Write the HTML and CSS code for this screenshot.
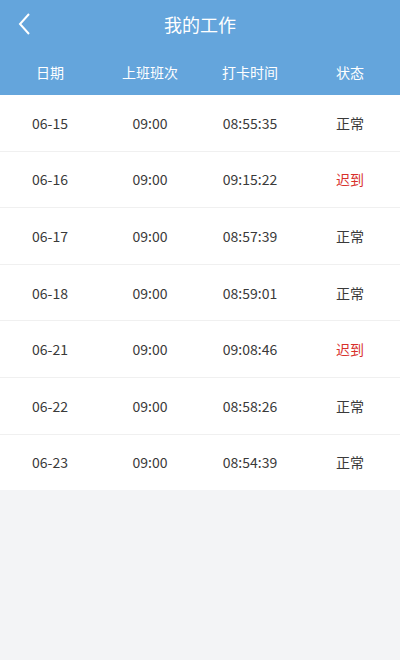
FILE: index.html
```html
<!DOCTYPE html>
<html>
<head>
    <title>我的工作</title>
    <meta charset="UTF-8">
    <link rel="stylesheet" href="styles.css">
</head>
<body>
    <div class="header">
        <div class="title-bar">
            <span class="back">
                <svg width="14" height="24" viewBox="0 0 14 24"><path d="M12 2 L3 12 L12 22" fill="none" stroke="#fff" stroke-width="2"/></svg>
            </span>
            <span class="title">我的工作</span>
        </div>
        <div class="cols">
            <span>日期</span>
            <span>上班班次</span>
            <span>打卡时间</span>
            <span>状态</span>
        </div>
    </div>
    <div class="list">
        <div class="row"><span>06-15</span><span>09:00</span><span>08:55:35</span><span>正常</span></div>
        <div class="row"><span>06-16</span><span>09:00</span><span>09:15:22</span><span class="late">迟到</span></div>
        <div class="row"><span>06-17</span><span>09:00</span><span>08:57:39</span><span>正常</span></div>
        <div class="row"><span>06-18</span><span>09:00</span><span>08:59:01</span><span>正常</span></div>
        <div class="row"><span>06-21</span><span>09:00</span><span>09:08:46</span><span class="late">迟到</span></div>
        <div class="row"><span>06-22</span><span>09:00</span><span>08:58:26</span><span>正常</span></div>
        <div class="row"><span>06-23</span><span>09:00</span><span>08:54:39</span><span>正常</span></div>
    </div>
</body>
</html>
```
FILE: styles.css
```css
body {
    margin: 0;
    font-family: "Noto Sans CJK SC", "Noto Sans", sans-serif;
    background-color: #f3f4f6;
    height: 660px;
}
.header {
    background-color: #64a5dc;
    color: #fff;
    height: 95px;
}
.title-bar {
    height: 48px;
    display: flex;
    align-items: center;
    justify-content: center;
    position: relative;
}
.back {
    position: absolute;
    left: 17px;
    top: 12px;
}
.title {
    font-size: 18px;
}
.cols {
    height: 47px;
    display: grid;
    grid-template-columns: repeat(4, 1fr);
    align-items: center;
    font-size: 14px;
    text-align: center;
}
.list {
    background-color: #fff;
}
.row {
    height: 55.6px;
    display: grid;
    grid-template-columns: repeat(4, 1fr);
    align-items: center;
    text-align: center;
    font-size: 14px;
    color: #3a3a3a;
    border-bottom: 1px solid #f0f0f0;
}
.row:last-child {
    border-bottom: none;
}
.late {
    color: #d8302b;
}
```
